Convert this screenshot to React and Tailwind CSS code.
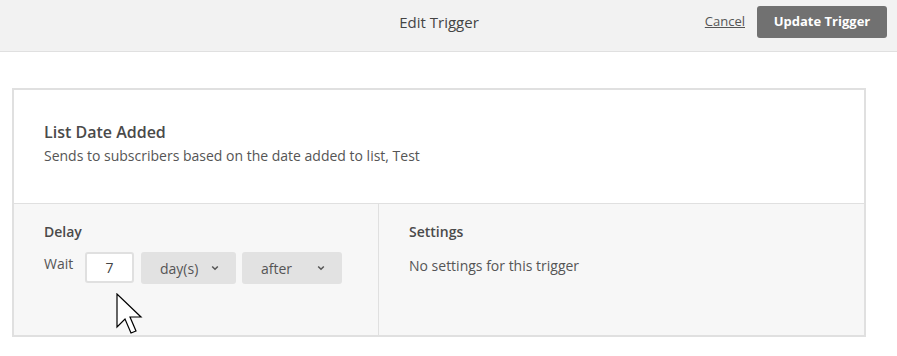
import React from 'react';

function Chevron() {
  return (
    <svg width="8" height="6" viewBox="0 0 8 6" className="inline-block">
      <path d="M1.2 1.5 L4 4.3 L6.8 1.5" stroke="#555" strokeWidth="1.5" fill="none" />
    </svg>
  );
}

function Select({ label, width }) {
  return (
    <div className={`${width} h-[32px] bg-[#e2e2e2] rounded-[3px] flex items-center justify-between pl-[19px] pr-[17px] text-[14px] text-[#555]`}>
      <span>{label}</span>
      <Chevron />
    </div>
  );
}

export default function App() {
  return (
    <div className="w-[897px] h-[356px] bg-white relative overflow-hidden" style={{ fontFamily: '"Open Sans", "Noto Sans", sans-serif' }}>
      {/* Header */}
      <header className="h-[52px] bg-[#f2f2f2] border-b border-[#e0e0e0] flex items-start relative">
        <div className="absolute left-0 right-[19px] top-[10px] text-center text-[15px] text-[#444] leading-[24px]">Edit Trigger</div>
        <div className="ml-auto flex items-center gap-[12px] pr-[10px] pt-[6px] relative">
          <a href="#" className="text-[13px] text-[#555] underline">Cancel</a>
          <button className="w-[130px] h-[32px] bg-[#717171] rounded-[3px] text-white text-[13px] font-bold">
            Update Trigger
          </button>
        </div>
      </header>

      {/* Card */}
      <main className="ml-[12px] mt-[36px] w-[854px] h-[249px] border-2 border-[#e0e0e0] flex flex-col">
        <section className="h-[114px] bg-white border-b border-[#e0e0e0] pl-[30px] pt-[30px]">
          <h1 className="text-[16px] font-semibold text-[#4a4a4a] leading-[24px]">List Date Added</h1>
          <p className="text-[14px] text-[#555] leading-[22px] mt-[1px]">Sends to subscribers based on the date added to list, Test</p>
        </section>
        <section className="flex-1 bg-[#f7f7f7] flex">
          <div className="w-[365px] border-r border-[#e0e0e0] pl-[30px] pt-[17px]">
            <h2 className="text-[14px] font-semibold text-[#4a4a4a] leading-[22px]">Delay</h2>
            <div className="flex items-start mt-[9px]">
              <span className="text-[14px] text-[#555] leading-[22px] mt-[1px] w-[41px]">Wait</span>
              <div className="w-[49px] h-[31px] bg-white border-2 border-[#e0e0e0] rounded-[3px] flex items-center justify-center text-[14px] text-[#444]">7</div>
              <div className="ml-[7px]"><Select label="day(s)" width="w-[95px]" /></div>
              <div className="ml-[6px]"><Select label="after" width="w-[100px]" /></div>
            </div>
          </div>
          <div className="flex-1 pl-[30px] pt-[17px]">
            <h2 className="text-[14px] font-semibold text-[#4a4a4a] leading-[22px]">Settings</h2>
            <p className="text-[14px] text-[#555] leading-[22px] mt-[12px]">No settings for this trigger</p>
          </div>
        </section>
      </main>

      {/* Mouse cursor */}
      <svg className="absolute left-[116px] top-[293px]" width="28" height="42" viewBox="0 0 14 21">
        <path d="M0.5 0.5 L0.5 17 L4.5 13 L7.5 20 L10 19 L7 12 L12.5 12 Z" fill="white" stroke="black" strokeWidth="0.6" strokeLinejoin="miter" />
      </svg>
    </div>
  );
}
